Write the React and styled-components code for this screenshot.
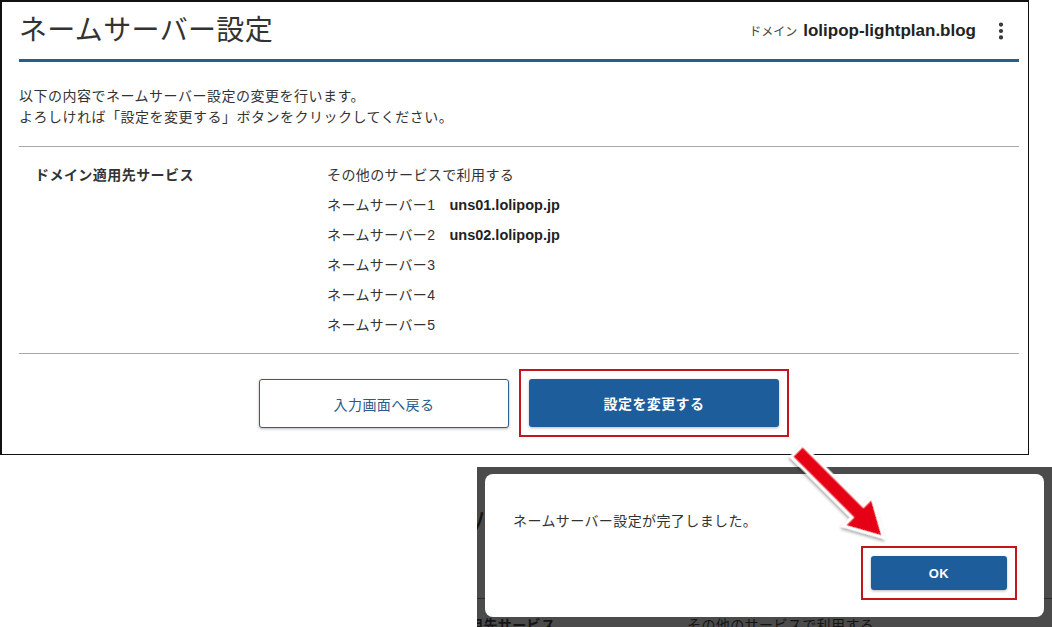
import React from 'react';
import styled, { createGlobalStyle, css } from 'styled-components';
import { EllipsisVertical } from 'lucide-react';

const GlobalStyle = createGlobalStyle`
  html, body {
    margin: 0;
    padding: 0;
    background: #fff;
  }
  body {
    font-family: "Liberation Sans", "Noto Sans CJK JP", sans-serif;
    color: #333;
  }
`;

const Page = styled.div`
  position: relative;
  width: 1052px;
  height: 627px;
  overflow: hidden;
  display: flex;
  flex-direction: column;
`;

// 上段：確認画面
const Panel = styled.section`
  box-sizing: border-box;
  width: 1029px;
  height: 455px;
  border: 1px solid #111;
  border-top-width: 2px;
  border-left-width: 2px;
  padding: 0 9px 0 17px;
  background: #fff;
`;

const Header = styled.header`
  display: flex;
  align-items: center;
  height: 57px;
  border-bottom: 3px solid #23608f;
`;

const Title = styled.h1`
  margin: 0;
  font-size: 28px;
  font-weight: 400;
  line-height: 1;
  letter-spacing: 0.35px;
  color: #333;
`;

const DomainInfo = styled.div`
  margin-left: auto;
  display: flex;
  align-items: baseline;
  gap: 6px;
`;

const DomainLabel = styled.span`
  font-size: 12px;
  color: #444;
`;

const DomainName = styled.span`
  font-size: 17px;
  font-weight: 700;
  color: #222;
`;

const MenuButton = styled.span`
  display: flex;
  margin-left: 14px;
  margin-right: 7px;
  color: #333;
`;

const Intro = styled.p`
  margin: 24px 0 18px;
  font-size: 14px;
  line-height: 21px;
  letter-spacing: 0.5px;
`;

const Section = styled.div`
  display: grid;
  grid-template-columns: 292px 1fr;
  padding: 13px 0 13px 16px;
  border-top: 1px solid #a8a8a8;
  border-bottom: 1px solid #a8a8a8;
`;

const FieldLabel = styled.div`
  font-size: 14px;
  font-weight: 700;
  line-height: 30px;
  letter-spacing: 0.45px;
  color: #333;
`;

const ValueList = styled.ul`
  list-style: none;
  margin: 0;
  padding: 0;
`;

const ValueItem = styled.li`
  display: flex;
  gap: 14px;
  font-size: 14px;
  line-height: 30px;
  letter-spacing: 0.4px;
`;

const Host = styled.span`
  font-weight: 700;
  font-size: 14.5px;
  letter-spacing: 0;
  color: #222;
`;

const Actions = styled.div`
  display: flex;
  justify-content: center;
  gap: 20px;
  padding-top: 25px;
`;

// 赤枠は画像上の注記なのでボタンに重ねて描く
const highlight = css`
  &::after {
    content: '';
    position: absolute;
    inset: -10px;
    border: 2px solid #c3151c;
    pointer-events: none;
  }
`;

const Button = styled.button`
  position: relative;
  box-sizing: border-box;
  width: ${(p) => p.$w || 250}px;
  height: ${(p) => p.$h || 49}px;
  border-radius: 3px;
  font-family: inherit;
  font-size: ${(p) => p.$size || 14}px;
  letter-spacing: 0.4px;
  cursor: pointer;
  box-shadow: 0 1px 3px rgba(0, 0, 0, 0.28);
  ${(p) => p.$highlight && highlight}
`;

const OutlineButton = styled(Button)`
  background: #fff;
  border: 1px solid #2a5f91;
  color: #2a5a88;
`;

const PrimaryButton = styled(Button)`
  background: #1d5d9b;
  border: none;
  color: #fff;
  font-weight: 700;
`;

// 下段：完了ダイアログのスクリーンショット
const Shot = styled.div`
  position: relative;
  margin: 12px 0 0 477px;
  width: 575px;
  height: 160px;
  background: #4b4b4b;
  overflow: hidden;
`;

const BehindHeader = styled.div`
  box-sizing: border-box;
  height: 132px;
  padding-top: 40px;
  margin-left: -144px;
  border-bottom: 1px solid #2c2c2c;
`;

const BehindTitle = styled.div`
  font-size: 28px;
  line-height: 30px;
  color: #141414;
  white-space: nowrap;
`;

const BehindRow = styled.div`
  display: grid;
  grid-template-columns: 290px 1fr;
  margin-left: -80px;
  padding-top: 11px;
  font-size: 14px;
  line-height: 30px;
  letter-spacing: 0.4px;
  color: #141414;
  white-space: nowrap;
`;

const Dialog = styled.div`
  position: absolute;
  left: 8px;
  top: 7px;
  box-sizing: border-box;
  width: 559px;
  height: 143px;
  padding: 36px 37px 0 28px;
  background: #fff;
  border-radius: 8px;
`;

const Message = styled.p`
  margin: 0;
  font-size: 14px;
  line-height: 22px;
  letter-spacing: 0.4px;
  color: #333;
`;

const DialogActions = styled.div`
  display: flex;
  justify-content: flex-end;
  margin-top: 24px;
`;

const Arrow = styled.svg`
  position: absolute;
  left: 770px;
  top: 430px;
  overflow: visible;
`;

const servers = [
  { name: 'ネームサーバー1', host: 'uns01.lolipop.jp' },
  { name: 'ネームサーバー2', host: 'uns02.lolipop.jp' },
  { name: 'ネームサーバー3' },
  { name: 'ネームサーバー4' },
  { name: 'ネームサーバー5' },
];

function App() {
  return (
    <Page>
      <GlobalStyle />
      <Panel>
        <Header>
          <Title>ネームサーバー設定</Title>
          <DomainInfo>
            <DomainLabel>ドメイン</DomainLabel>
            <DomainName>lolipop-lightplan.blog</DomainName>
          </DomainInfo>
          <MenuButton>
            <EllipsisVertical size={22} strokeWidth={2.6} />
          </MenuButton>
        </Header>

        <Intro>
          以下の内容でネームサーバー設定の変更を行います。
          <br />
          よろしければ「設定を変更する」ボタンをクリックしてください。
        </Intro>

        <Section>
          <FieldLabel>ドメイン適用先サービス</FieldLabel>
          <ValueList>
            <ValueItem>その他のサービスで利用する</ValueItem>
            {servers.map((s) => (
              <ValueItem key={s.name}>
                <span>{s.name}</span>
                {s.host && <Host>{s.host}</Host>}
              </ValueItem>
            ))}
          </ValueList>
        </Section>

        <Actions>
          <OutlineButton>入力画面へ戻る</OutlineButton>
          <PrimaryButton $h={48} $highlight>
            設定を変更する
          </PrimaryButton>
        </Actions>
      </Panel>

      <Shot>
        <BehindHeader>
          <BehindTitle>ネームサーバー設定</BehindTitle>
        </BehindHeader>
        <BehindRow>
          <strong>ドメイン適用先サービス</strong>
          <span>その他のサービスで利用する</span>
        </BehindRow>
        <Dialog>
          <Message>ネームサーバー設定が完了しました。</Message>
          <DialogActions>
            <PrimaryButton $w={136} $h={34} $size={13} $highlight>
              OK
            </PrimaryButton>
          </DialogActions>
        </Dialog>
      </Shot>

      <Arrow width="130" height="125" viewBox="0 0 130 125">
        <defs>
          <filter id="arrowShadow" x="-30%" y="-30%" width="160%" height="160%">
            <feDropShadow dx="1" dy="2" stdDeviation="1.6" floodColor="#000" floodOpacity="0.35" />
          </filter>
        </defs>
        <g transform="translate(27 21) rotate(45)" filter="url(#arrowShadow)">
          <polygon
            points="0,-8 86,-8 86,-20 122,0 86,20 86,8 0,8"
            fill="#e60012"
            stroke="#fff"
            strokeWidth="3"
            strokeLinejoin="miter"
          />
        </g>
      </Arrow>
    </Page>
  );
}

export default App;
